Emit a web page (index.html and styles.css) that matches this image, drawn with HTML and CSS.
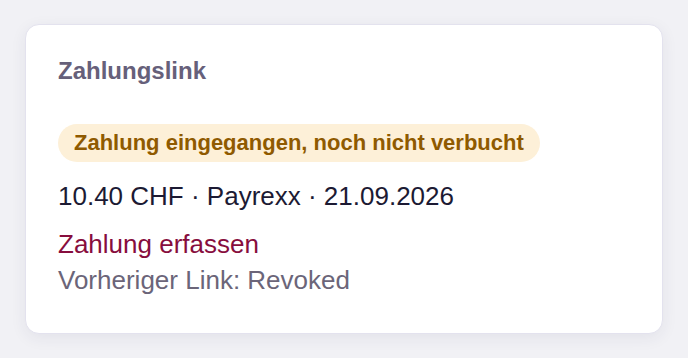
FILE: index.html
```html
<!DOCTYPE html>
<html lang="de">
<head>
  <meta charset="UTF-8">
  <meta name="viewport" content="width=device-width, initial-scale=1.0">
  <title>Zahlungslink</title>
  <link rel="stylesheet" href="styles.css">
</head>
<body>
  <section class="card">
    <h2 class="card-title">Zahlungslink</h2>
    <span class="badge">Zahlung eingegangen, noch nicht verbucht</span>
    <p class="summary">10.40 CHF · Payrexx · 21.09.2026</p>
    <a class="action" href="#">Zahlung erfassen</a>
    <p class="muted">Vorheriger Link: Revoked</p>
  </section>
</body>
</html>
```

FILE: styles.css
```css
body {
  font-family: "Liberation Sans", Arial, sans-serif;
  margin: 0;
  padding: 24px 25px;
  background-color: #f1f1f5;
  color: #1c1a33;
}

.card {
  display: flex;
  flex-direction: column;
  align-items: flex-start;
  height: 310px;
  box-sizing: border-box;
  padding: 32px 32px;
  background: #fff;
  border: 1px solid #e3e2ee;
  border-radius: 14px;
  box-shadow: 0 4px 16px rgba(40, 40, 80, 0.07);
}

.card-title {
  margin: 0 0 39px;
  font-size: 24px;
  font-weight: bold;
  color: #66607a;
}

.badge {
  padding: 6px 16px;
  font-size: 22px;
  line-height: 26px;
  font-weight: bold;
  color: #8f5a00;
  background: #fdf0d8;
  border-radius: 999px;
}

.summary {
  margin: 19px 0 0;
  font-size: 26px;
}

.action {
  margin-top: 17px;
  font-size: 26px;
  color: #870d3d;
  text-decoration: none;
}

.muted {
  margin: 5px 0 0;
  font-size: 26px;
  color: #6b6579;
}
```
